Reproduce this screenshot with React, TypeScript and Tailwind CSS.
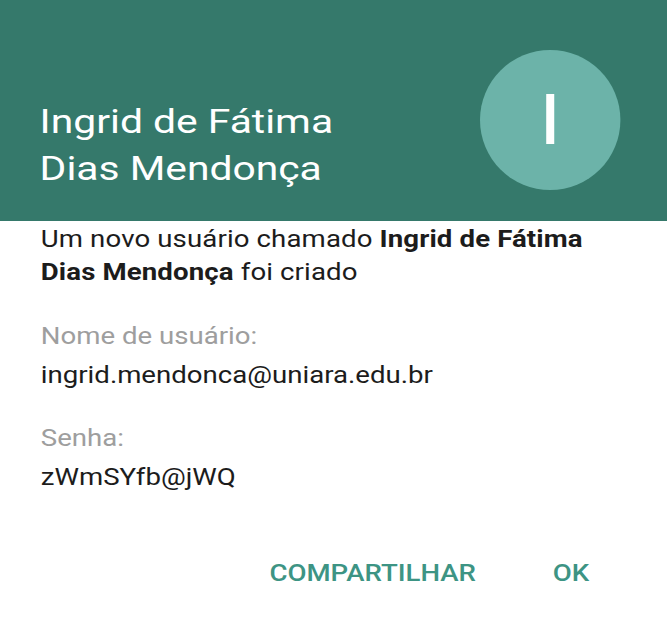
import React from "react";

// the reference is an Android dialog stretched sideways, so the layout is
// drawn narrow and widened by 1.2 as a whole
const user = {
  first: "Ingrid de Fátima",
  last: "Dias Mendonça",
  email: "ingrid.mendonca@uniara.edu.br",
  password: "zWmSYfb@jWQ",
};

export default function App() {
  return (
    <div className="w-[667px] h-[623px] overflow-hidden bg-white font-['Roboto',sans-serif]">
      <div className="w-[556px] origin-top-left scale-x-[1.2]">
        <div className="h-[221px] bg-[#35796b] flex items-start justify-between pl-[33px] pr-[39px]">
          <h1 className="mt-[98px] text-[34px] leading-[47px] font-normal text-white">
            {user.first}
            <br />
            {user.last}
          </h1>
          <div className="mt-[50px] w-[117px] h-[140px] rounded-[50%] bg-[#6cb3a9] flex items-center justify-center">
            <span className="text-[70px] leading-[70px] text-white">{user.first[0]}</span>
          </div>
        </div>

        <div className="px-[34px] pt-[2px] text-[23px] leading-[33px] text-[#1c1c1c]">
          <p className="tracking-[0.1px]">
            Um novo usuário chamado <span className="font-bold">{user.first}</span>
            <br />
            <span className="font-bold">{user.last}</span> foi criado
          </p>

          <div className="mt-[31px] space-y-[6px]">
            <p className="text-[#9e9e9e]">Nome de usuário:</p>
            <p>{user.email}</p>
          </div>

          <div className="mt-[30px] space-y-[6px]">
            <p className="text-[#9e9e9e]">Senha:</p>
            <p>{user.password}</p>
          </div>
        </div>

        <div className="mt-[63px] flex justify-end gap-[64px] pr-[65px] text-[23px] leading-[33px] font-medium text-[#3d9484]">
          <button className="uppercase">Compartilhar</button>
          <button className="uppercase">OK</button>
        </div>
      </div>
    </div>
  );
}
